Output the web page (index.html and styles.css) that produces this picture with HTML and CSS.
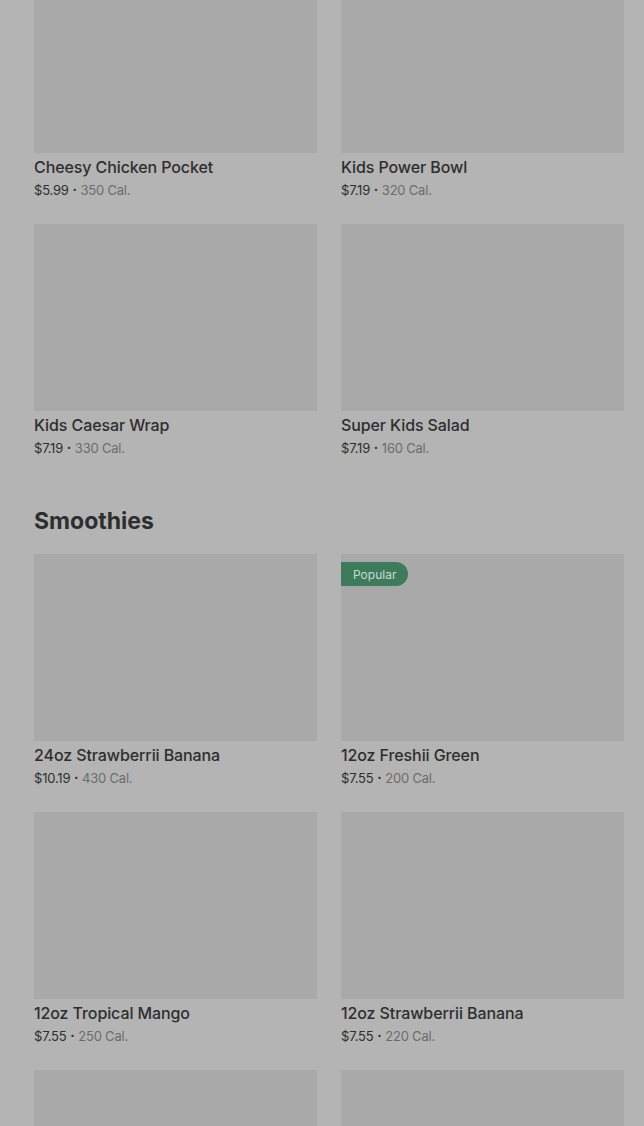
FILE: index.html
```html
<!DOCTYPE html>
<html>
<head>
<meta charset="utf-8">
<link rel="stylesheet" href="styles.css">
</head>
<body>
<main class="menu">
  <section class="section">
    <div class="grid">
      <div class="card"><div class="thumb"></div><div class="name">Cheesy Chicken Pocket</div><div class="meta"><span class="price">$5.99</span><span class="dot">•</span><span class="cal">350 Cal.</span></div></div>
      <div class="card"><div class="thumb"></div><div class="name">Kids Power Bowl</div><div class="meta"><span class="price">$7.19</span><span class="dot">•</span><span class="cal">320 Cal.</span></div></div>
      <div class="card"><div class="thumb"></div><div class="name">Kids Caesar Wrap</div><div class="meta"><span class="price">$7.19</span><span class="dot">•</span><span class="cal">330 Cal.</span></div></div>
      <div class="card"><div class="thumb"></div><div class="name">Super Kids Salad</div><div class="meta"><span class="price">$7.19</span><span class="dot">•</span><span class="cal">160 Cal.</span></div></div>
    </div>
  </section>
  <section class="section">
    <h2 class="heading">Smoothies</h2>
    <div class="grid">
      <div class="card"><div class="thumb"></div><div class="name">24oz Strawberrii Banana</div><div class="meta"><span class="price">$10.19</span><span class="dot">•</span><span class="cal">430 Cal.</span></div></div>
      <div class="card"><div class="thumb"><span class="badge">Popular</span></div><div class="name">12oz Freshii Green</div><div class="meta"><span class="price">$7.55</span><span class="dot">•</span><span class="cal">200 Cal.</span></div></div>
      <div class="card"><div class="thumb"></div><div class="name">12oz Tropical Mango</div><div class="meta"><span class="price">$7.55</span><span class="dot">•</span><span class="cal">250 Cal.</span></div></div>
      <div class="card"><div class="thumb"></div><div class="name">12oz Strawberrii Banana</div><div class="meta"><span class="price">$7.55</span><span class="dot">•</span><span class="cal">220 Cal.</span></div></div>
      <div class="card"><div class="thumb"></div><div class="name"></div><div class="meta"></div></div>
      <div class="card"><div class="thumb"></div><div class="name"></div><div class="meta"></div></div>
    </div>
  </section>
</main>
</body>
</html>
```
FILE: styles.css
```css
html, body {
  margin: 0;
  padding: 0;
  background: #b4b4b4;
  height: 1126px;
  overflow: hidden;
}
body {
  font-family: Inter, "Noto Sans", sans-serif;
  color: #2e2e2e;
}
.menu {
  padding: 0 20px 0 34px;
  margin-top: -34px;
}
.section {
  margin-bottom: 48px;
}
.heading {
  margin: 0 0 18px;
  font-size: 23px;
  line-height: 30px;
  font-weight: 700;
  color: #2e2e2e;
}
.grid {
  display: grid;
  grid-template-columns: 283px 283px;
  column-gap: 24px;
  row-gap: 24px;
}
.card {
  display: flex;
  flex-direction: column;
}
.thumb {
  position: relative;
  height: 187px;
  background: #a9a9a9;
}
.badge {
  position: absolute;
  left: 0;
  top: 8px;
  height: 24px;
  padding: 0 12px;
  display: flex;
  align-items: center;
  background: #3e7b5c;
  color: #c9dccf;
  font-size: 12px;
  border-radius: 0 12px 12px 0;
}
.name {
  margin-top: 4px;
  font-size: 16px;
  line-height: 20px;
  font-weight: 500;
  color: #2e2e2e;
  height: 20px;
  letter-spacing: -0.1px;
}
.meta {
  margin-top: 3px;
  font-size: 13px;
  line-height: 20px;
  height: 20px;
  color: #2e2e2e;
  letter-spacing: -0.2px;
  display: flex;
  align-items: center;
}
.dot {
  font-size: 7px;
  margin: 0 4px;
  color: #2e2e2e;
}
.cal {
  color: #6c6c6c;
}
```
